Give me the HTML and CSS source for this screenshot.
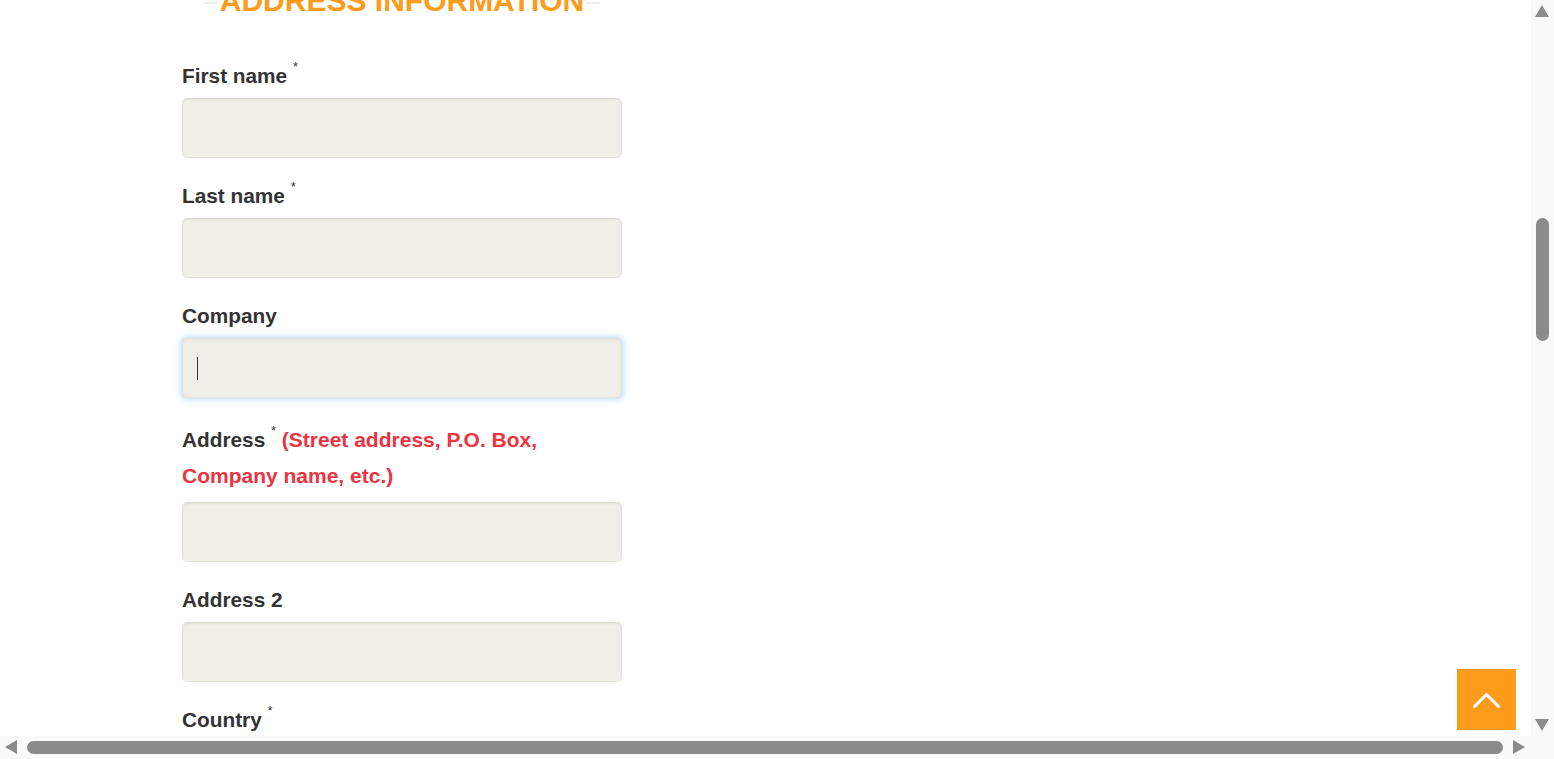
FILE: index.html
```html
<!DOCTYPE html>
<html lang="en">
<head>
<meta charset="utf-8">
<title>Address information</title>
<link rel="stylesheet" href="styles.css">
</head>
<body>
<div class="page">
  <form class="form">
    <h2 class="section-title"><span class="section-title__text">ADDRESS INFORMATION</span></h2>
    <div class="fields">
      <div class="field">
        <label class="label">First name <sup class="req">*</sup></label>
        <input class="input" type="text">
      </div>
      <div class="field">
        <label class="label">Last name <sup class="req">*</sup></label>
        <input class="input" type="text">
      </div>
      <div class="field">
        <label class="label">Company</label>
        <div class="input-wrap">
          <input class="input input--focus" type="text">
          <span class="caret"></span>
        </div>
      </div>
      <div class="field">
        <label class="label">Address <sup class="req">*</sup> <span class="hint">(Street address, P.O. Box, Company name, etc.)</span></label>
        <input class="input" type="text">
      </div>
      <div class="field">
        <label class="label">Address 2</label>
        <input class="input" type="text">
      </div>
      <div class="field">
        <label class="label">Country <sup class="req">*</sup></label>
        <input class="input" type="text">
      </div>
    </div>
  </form>
</div>

<a class="to-top" href="#" aria-label="Back to top">
  <svg width="59" height="61" viewBox="0 0 59 61"><polyline points="17.5,37.5 29.5,25.5 41.5,37.5" fill="none" stroke="#fff" stroke-width="3" stroke-linecap="round" stroke-linejoin="round"/></svg>
</a>

<div class="vscroll">
  <span class="arrow arrow--up"></span>
  <span class="vscroll__thumb"></span>
  <span class="arrow arrow--down"></span>
</div>
<div class="hscroll">
  <span class="arrow arrow--left"></span>
  <span class="hscroll__thumb"></span>
  <span class="arrow arrow--right"></span>
</div>
<div class="scroll-corner"></div>
</body>
</html>
```

FILE: styles.css
```css
html, body {
  margin: 0;
  padding: 0;
  height: 100%;
  overflow: hidden;
  background: #ffffff;
}

body {
  font-family: "Liberation Sans", Arial, sans-serif;
  color: #333333;
}

.page {
  padding-left: 182px;
}

.form {
  width: 440px;
  margin-top: -17px;
}

.section-title {
  display: flex;
  align-items: center;
  gap: 2px;
  margin: 0 22px 43px;
  font-size: 30px;
  line-height: 36px;
  font-weight: bold;
  color: #fd9c1b;
}

.section-title::before,
.section-title::after {
  content: "";
  flex: 1;
  height: 2px;
  margin-top: 4px;
  background: #eeeeee;
}

.section-title__text {
  white-space: nowrap;
}

.fields {
  display: flex;
  flex-direction: column;
  gap: 24px;
}

.field {
  display: flex;
  flex-direction: column;
}

.label {
  display: block;
  font-size: 20.8px;
  line-height: 28px;
  font-weight: bold;
  color: #333333;
  margin-bottom: 8px;
}

.req {
  font-size: 13px;
  font-weight: normal;
  line-height: 0;
  vertical-align: 12px;
  color: #333333;
}

.hint {
  color: #ec3341;
  font-size: 21px;
  line-height: 36px;
}

.input {
  display: block;
  box-sizing: border-box;
  width: 440px;
  height: 60px;
  margin: 0;
  padding: 0 14px;
  border: 1px solid #e4e2da;
  border-top-color: #dcdad2;
  border-radius: 5px;
  background: #efeee7;
  box-shadow: inset 0 1px 2px rgba(0, 0, 0, 0.06);
  font-family: inherit;
  font-size: 18px;
  outline: none;
}

.input--focus {
  border-color: #e2e0d8;
  box-shadow: 0 0 6px 1px rgba(120, 180, 245, 0.55), inset 0 1px 2px rgba(0, 0, 0, 0.05);
}

.input-wrap {
  position: relative;
}

.caret {
  position: absolute;
  left: 15px;
  top: 19px;
  width: 1px;
  height: 23px;
  background: #333333;
}

.to-top {
  position: fixed;
  right: 38px;
  bottom: 29px;
  width: 59px;
  height: 61px;
  background: #fd9c1b;
  display: block;
}

.to-top svg {
  display: block;
}

.vscroll {
  position: fixed;
  top: 0;
  right: 0;
  width: 23px;
  height: 736px;
  background: #f9f9f9;
}

.vscroll__thumb {
  position: absolute;
  left: 5px;
  top: 218px;
  width: 13px;
  height: 123px;
  border-radius: 7px;
  background: #8b8b8b;
}

.hscroll {
  position: fixed;
  left: 0;
  bottom: 0;
  width: 1531px;
  height: 23px;
  background: #f9f9f9;
}

.hscroll__thumb {
  position: absolute;
  left: 27px;
  top: 5px;
  width: 1476px;
  height: 13px;
  border-radius: 7px;
  background: #8b8b8b;
}

.scroll-corner {
  position: fixed;
  right: 0;
  bottom: 0;
  width: 23px;
  height: 23px;
  background: #f9f9f9;
}

.arrow {
  position: absolute;
  width: 0;
  height: 0;
  border-style: solid;
  border-color: transparent;
}

.arrow--up {
  left: 4px;
  top: 5px;
  border-width: 0 7.5px 12px 7.5px;
  border-bottom-color: #8b8b8b;
}

.arrow--down {
  left: 4px;
  bottom: 5px;
  border-width: 12px 7.5px 0 7.5px;
  border-top-color: #8b8b8b;
}

.arrow--left {
  left: 5px;
  top: 4px;
  border-width: 7.5px 12px 7.5px 0;
  border-right-color: #8b8b8b;
}

.arrow--right {
  left: 1513px;
  top: 4px;
  border-width: 7.5px 0 7.5px 12px;
  border-left-color: #8b8b8b;
}
```
